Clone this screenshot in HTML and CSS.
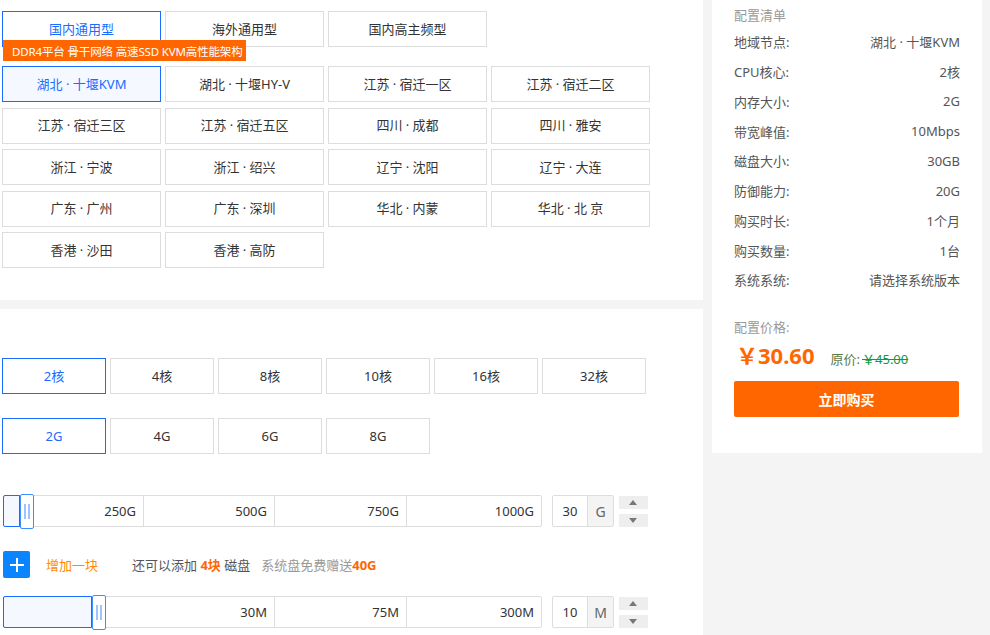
FILE: index.html
```html
<!DOCTYPE html>
<html lang="zh-CN">
<head>
<meta charset="utf-8">
<title>配置</title>
<link rel="stylesheet" href="styles.css">
</head>
<body>
<div class="page">
  <main class="main">
    <section class="sec-region">
      <div class="tabs">
        <div class="opt tab active">国内通用型</div>
        <div class="opt tab">海外通用型</div>
        <div class="opt tab">国内高主频型</div>
        <div class="banner">DDR4平台 骨干网络 高速SSD KVM高性能架构</div>
      </div>
      <div class="regions">
        <div class="opt active">湖北 · 十堰KVM</div>
        <div class="opt">湖北 · 十堰HY-V</div>
        <div class="opt">江苏 · 宿迁一区</div>
        <div class="opt">江苏 · 宿迁二区</div>
        <div class="opt">江苏 · 宿迁三区</div>
        <div class="opt">江苏 · 宿迁五区</div>
        <div class="opt">四川 · 成都</div>
        <div class="opt">四川 · 雅安</div>
        <div class="opt">浙江 · 宁波</div>
        <div class="opt">浙江 · 绍兴</div>
        <div class="opt">辽宁 · 沈阳</div>
        <div class="opt">辽宁 · 大连</div>
        <div class="opt">广东 · 广州</div>
        <div class="opt">广东 · 深圳</div>
        <div class="opt">华北 · 内蒙</div>
        <div class="opt">华北 · 北 京</div>
        <div class="opt">香港 · 沙田</div>
        <div class="opt">香港 · 高防</div>
      </div>
    </section>
    <div class="divider"></div>
    <section class="sec-spec">
      <div class="chips cpu">
        <div class="opt chip active">2核</div>
        <div class="opt chip">4核</div>
        <div class="opt chip">8核</div>
        <div class="opt chip">10核</div>
        <div class="opt chip">16核</div>
        <div class="opt chip">32核</div>
      </div>
      <div class="chips mem">
        <div class="opt chip active">2G</div>
        <div class="opt chip">4G</div>
        <div class="opt chip">6G</div>
        <div class="opt chip">8G</div>
      </div>

      <div class="slider-row disk">
        <div class="track">
          <div class="seg s1">250G</div>
          <div class="seg s2">500G</div>
          <div class="seg s3">750G</div>
          <div class="seg s4">1000G</div>
          <div class="fill" style="width:17px"></div>
          <div class="handle" style="left:16px"><span></span><span></span></div>
        </div>
        <div class="numbox"><span class="num">30</span><span class="unit">G</span></div>
        <div class="spin"><div class="up"></div><div class="down"></div></div>
      </div>

      <div class="add-row">
        <div class="plus"><svg width="16" height="16" viewBox="0 0 16 16"><path d="M8 1v14M1 8h14" stroke="#fff" stroke-width="2"/></svg></div>
        <span class="add-text">增加一块</span>
        <span class="can-add">还可以添加 <b>4块</b> 磁盘</span>
        <span class="free">系统盘免费赠送<b>40G</b></span>
      </div>

      <div class="slider-row bw">
        <div class="track">
          <div class="seg b1">30M</div>
          <div class="seg s3">75M</div>
          <div class="seg s4">300M</div>
          <div class="fill" style="width:89px"></div>
          <div class="handle" style="left:88px"><span></span><span></span></div>
        </div>
        <div class="numbox"><span class="num">10</span><span class="unit">M</span></div>
        <div class="spin"><div class="up"></div><div class="down"></div></div>
      </div>
    </section>
  </main>
  <aside class="side">
    <div class="card">
      <div class="card-title">配置清单</div>
      <dl class="list">
        <div class="item"><dt>地域节点:</dt><dd>湖北 · 十堰KVM</dd></div>
        <div class="item"><dt>CPU核心:</dt><dd>2核</dd></div>
        <div class="item"><dt>内存大小:</dt><dd>2G</dd></div>
        <div class="item"><dt>带宽峰值:</dt><dd>10Mbps</dd></div>
        <div class="item"><dt>磁盘大小:</dt><dd>30GB</dd></div>
        <div class="item"><dt>防御能力:</dt><dd>20G</dd></div>
        <div class="item"><dt>购买时长:</dt><dd>1个月</dd></div>
        <div class="item"><dt>购买数量:</dt><dd>1台</dd></div>
        <div class="item"><dt>系统系统:</dt><dd>请选择系统版本</dd></div>
      </dl>
      <div class="price-label">配置价格:</div>
      <div class="price-row">
        <span class="price">￥30.60</span>
        <span class="orig-label">原价:</span>
        <span class="orig">￥45.00</span>
      </div>
      <button class="buy">立即购买</button>
    </div>
  </aside>
</div>
</body>
</html>
```

FILE: styles.css
```css
* { box-sizing: border-box; }
html, body { margin: 0; padding: 0; }
body {
  font-family: "Noto Sans", "Noto Sans CJK SC", sans-serif;
  font-size: 13px;
  color: #333;
  background: #f4f4f4;
  overflow: hidden;
}
.page { display: flex; width: 990px; height: 635px; }
.main { width: 703px; flex: none; background: #f4f4f4; }
.sec-region { background: #fff; height: 300px; padding: 11px 0 0 2px; }
.divider { height: 9px; }
.sec-spec { background: #fff; height: 326px; padding: 49px 0 0 2px; }

.opt {
  border: 1px solid #ddd;
  background: #fff;
  height: 36px;
  display: flex;
  align-items: center;
  justify-content: center;
  color: #333;
  white-space: nowrap;
  line-height: 1;
}
.opt.active { border-color: #1a6cff; color: #1a6cff; background: #f5f9ff; }
.opt.tab.active { background: #fff; }

.tabs { position: relative; display: flex; gap: 4px; }
.tab { width: 159px; }
.banner {
  position: absolute;
  left: 1px;
  top: 29px;
  width: 243px;
  height: 21px;
  background: #ff6600;
  color: #fff;
  font-size: 11.5px;
  letter-spacing: -0.15px;
  display: flex;
  align-items: center;
  padding-left: 9px;
  white-space: nowrap;
  overflow: hidden;
}

.regions {
  margin-top: 19px;
  display: grid;
  grid-template-columns: repeat(4, 159px);
  column-gap: 4px;
  row-gap: 5.5px;
}

.chips { display: flex; gap: 4px; }
.chip { width: 104px; }
.chip.active { background: #fff; }
.mem { margin-top: 24px; }

.slider-row { display: flex; align-items: center; padding-left: 1px; }
.disk { margin-top: 41px; }
.bw { margin-top: 18px; }
.track {
  position: relative;
  width: 539px;
  height: 32px;
  border: 1px solid #ddd;
  border-radius: 2px;
  display: flex;
  background: #fff;
}
.seg {
  border-left: 1px solid #ddd;
  display: flex;
  align-items: center;
  justify-content: flex-end;
  padding-right: 7px;
  color: #333;
  font-size: 13px;
}
.seg:first-child { border-left: none; }
.s1 { width: 139px; }
.s2 { width: 131px; }
.s3 { width: 132px; }
.s4 { flex: 1; }
.b1 { width: 270px; }
.fill {
  position: absolute;
  left: -1px;
  top: -1px;
  height: 32px;
  border: 1px solid #1a6cff;
  border-radius: 2px 0 0 2px;
  background: #f5f9ff;
}
.handle {
  position: absolute;
  top: -2px;
  width: 14px;
  height: 35px;
  border: 1px solid #3b8eff;
  border-radius: 2px;
  background: #fff;
  display: flex;
  justify-content: center;
  gap: 2px;
  padding-top: 9px;
}
.handle span { width: 2px; height: 15px; background: #9cc4ff; }

.numbox {
  margin-left: 10px;
  display: flex;
  height: 32px;
  border: 1px solid #ddd;
  border-radius: 2px;
}
.num { width: 34px; display: flex; align-items: center; justify-content: center; color: #333; font-size: 13px; }
.unit { width: 26px; border-left: 1px solid #ddd; background: #f4f4f4; display: flex; align-items: center; justify-content: center; color: #666; font-size: 14px; }
.spin { margin-left: 5px; display: flex; flex-direction: column; gap: 5px; }
.spin div { width: 29px; height: 13px; background: #eee; position: relative; }
.spin .up::after, .spin .down::after {
  content: "";
  position: absolute;
  left: 10px;
  width: 0; height: 0;
  border-left: 4.5px solid transparent;
  border-right: 4.5px solid transparent;
}
.spin .up::after { top: 4px; border-bottom: 5px solid #777; }
.spin .down::after { top: 4px; border-top: 5px solid #777; }

.add-row { margin-top: 24px; display: flex; align-items: center; height: 27px; padding-left: 1px; }
.plus {
  width: 27px; height: 27px; background: #0a84ff; border-radius: 2px;
  display: flex; align-items: center; justify-content: center;
}
.add-text { margin-left: 16px; color: #ff8a00; }
.can-add { margin-left: 34px; color: #555; }
.can-add b { color: #ff6600; }
.free { margin-left: 11px; color: #999; }
.free b { color: #ff6600; }

.side { flex: 1; padding-left: 9px; }
.card {
  width: 270px;
  height: 453px;
  background: #fff;
  padding: 6px 22px 0 22px;
}
.card-title { color: #999; height: 18px; line-height: 18px; }
.list { margin: 3px 0 0; }
.item {
  display: flex;
  justify-content: space-between;
  height: 29.75px;
  align-items: center;
  color: #555;
}
.item dt, .item dd { margin: 0; }
.price-label { margin-top: 23px; color: #999; height: 18px; line-height: 18px; }
.price-row { display: flex; align-items: baseline; margin-top: 2px; height: 30px; }
.price { color: #ff6600; font-size: 22px; font-weight: bold; margin-left: 2px; letter-spacing: 0; }
.orig-label { margin-left: 16px; color: #5b7a4a; font-size: 13px; }
.orig { margin-left: 2px; color: #119944; text-decoration: line-through; font-size: 13px; }
.buy {
  display: block;
  margin-top: 13px;
  width: 225px;
  height: 36px;
  border: none;
  border-radius: 2px;
  background: #ff6600;
  color: #fff;
  font-family: inherit;
  font-size: 14px;
  font-weight: bold;
}
```
